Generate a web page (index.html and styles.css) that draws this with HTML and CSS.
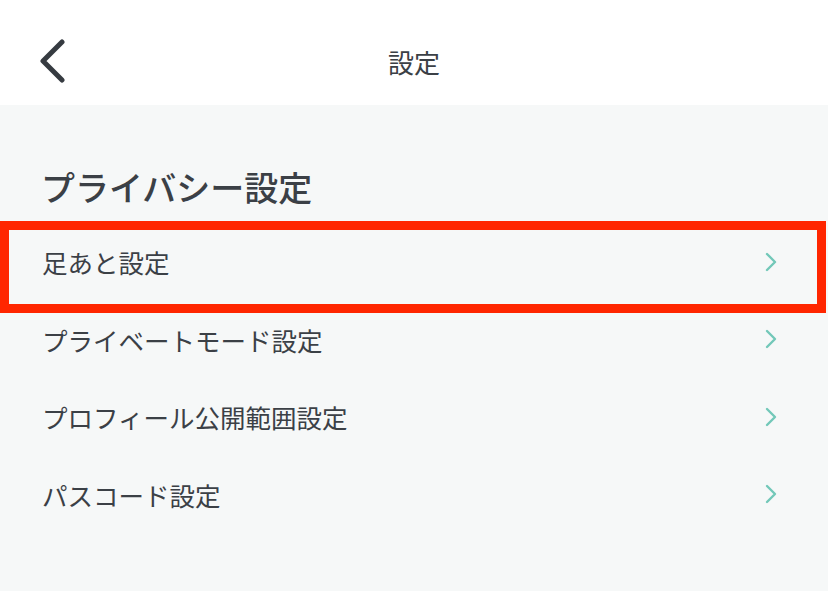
FILE: index.html
```html
<!DOCTYPE html>
<html lang="ja">
<head>
    <meta charset="UTF-8">
    <meta name="viewport" content="width=device-width, initial-scale=1.0">
    <title>設定</title>
    <link rel="stylesheet" href="styles.css">
</head>
<body>
    <header class="topbar">
        <a class="back" href="#">
            <svg width="28" height="44" viewBox="0 0 28 44">
                <path d="M23 3 L4 22 L23 41" fill="none" stroke="#363b41" stroke-width="5" stroke-linecap="round" stroke-linejoin="round"/>
            </svg>
        </a>
        <h1 class="title">設定</h1>
        <span></span>
    </header>

    <main class="settings">
        <h2 class="section">プライバシー設定</h2>
        <ul class="menu">
            <li class="row highlight">
                <span>足あと設定</span>
                <svg class="chev" width="12" height="20" viewBox="0 0 12 20"><path d="M2 2 L10 10 L2 18" fill="none" stroke="#72c8b8" stroke-width="2.4" stroke-linecap="round" stroke-linejoin="round"/></svg>
            </li>
            <li class="row">
                <span>プライベートモード設定</span>
                <svg class="chev" width="12" height="20" viewBox="0 0 12 20"><path d="M2 2 L10 10 L2 18" fill="none" stroke="#72c8b8" stroke-width="2.4" stroke-linecap="round" stroke-linejoin="round"/></svg>
            </li>
            <li class="row">
                <span>プロフィール公開範囲設定</span>
                <svg class="chev" width="12" height="20" viewBox="0 0 12 20"><path d="M2 2 L10 10 L2 18" fill="none" stroke="#72c8b8" stroke-width="2.4" stroke-linecap="round" stroke-linejoin="round"/></svg>
            </li>
            <li class="row">
                <span>パスコード設定</span>
                <svg class="chev" width="12" height="20" viewBox="0 0 12 20"><path d="M2 2 L10 10 L2 18" fill="none" stroke="#72c8b8" stroke-width="2.4" stroke-linecap="round" stroke-linejoin="round"/></svg>
            </li>
        </ul>
    </main>
</body>
</html>
```

FILE: styles.css
```css
* {
    box-sizing: border-box;
    padding: 0;
    margin: 0;
}

html, body {
    height: 100%;
}

body {
    font-family: "Noto Sans CJK JP", "Noto Sans", sans-serif;
    color: #3b4046;
    background: #f6f8f8;
    overflow: hidden;
}

.topbar {
    height: 105px;
    padding-top: 17px;
    background: #ffffff;
    display: grid;
    grid-template-columns: 1fr auto 1fr;
    align-items: center;
}

.back {
    display: flex;
    padding-left: 39px;
}

.title {
    font-size: 26px;
    font-weight: 400;
    line-height: 1;
    padding-top: 2px;
}

.settings {
    padding-top: 58px;
}

.section {
    font-size: 34px;
    font-weight: 500;
    line-height: 47px;
    padding-left: 41px;
    margin-bottom: 15px;
}

.menu {
    list-style: none;
}

.row {
    height: 77.5px;
    display: flex;
    align-items: center;
    justify-content: space-between;
    padding: 0 51px 0 42px;
    font-size: 25.5px;
    position: relative;
}

.row span {
    margin-top: -4px;
}

.chev {
    margin-top: -4px;
}

/* annotation frame */
.highlight::after {
    content: "";
    position: absolute;
    left: 0;
    right: 2px;
    top: -4px;
    bottom: -10px;
    border: 9px solid #ff2600;
}
```
